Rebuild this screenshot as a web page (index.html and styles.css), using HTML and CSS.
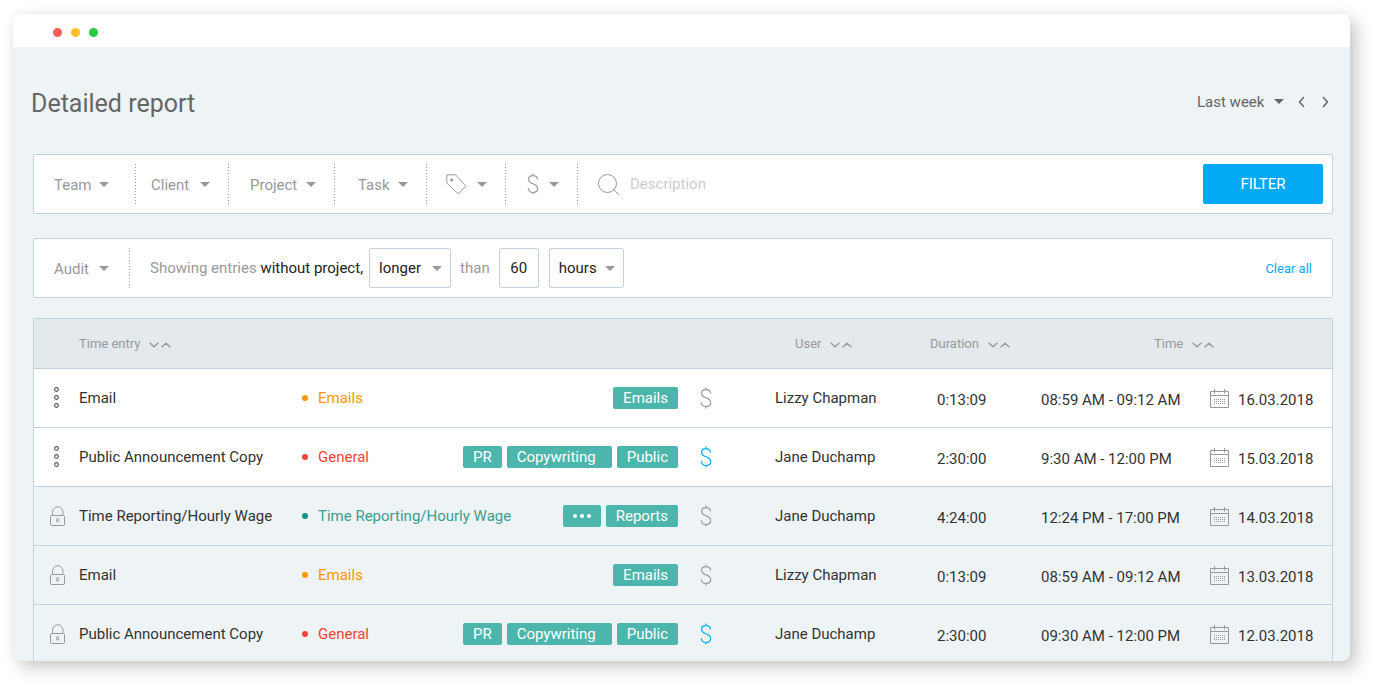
FILE: index.html
```html
<!DOCTYPE html>
<html lang="en">
<head>
<meta charset="utf-8">
<title>Detailed report</title>
<link rel="stylesheet" href="styles.css">
</head>
<body>
<svg class="sprite" aria-hidden="true">
  <symbol id="caret" viewBox="0 0 10 5"><path d="M0 0h10L5 5z" fill="currentColor"/></symbol>
  <symbol id="dollar" viewBox="0 0 12 22"><path d="M10.500 6.600C10.500 4 8.700 2.600 6 2.600S1.600 4 1.600 6.400c0 2.300 1.800 3.400 4.400 4.400 2.900 1.100 4.700 2.200 4.700 4.800 0 2.400-2 3.900-4.700 3.900S1.300 18 1.300 15.200M6 .5v2M6 19.500v2" fill="none" stroke="currentColor" stroke-width="1.200"/></symbol>
  <symbol id="sort" viewBox="0 0 22 6"><path d="M.6.7 5 4.800 9.400.7M12.600 5.300 17 1.200l4.400 4.100" fill="none" stroke="currentColor" stroke-width="1.400"/></symbol>
  <symbol id="lock" viewBox="0 0 16 20"><path d="M2.500 9V6.500a5 5.500 0 0 1 10.500 0V9" fill="none" stroke="currentColor"/><rect x=".5" y="9.500" width="14" height="10" rx="1" fill="none" stroke="currentColor"/><rect x="6.500" y="12.500" width="2.200" height="3.500" rx="1" fill="none" stroke="currentColor"/></symbol>
  <symbol id="more" viewBox="0 0 6 22"><g fill="none" stroke="currentColor" stroke-width="1.100"><circle cx="2.500" cy="2.500" r="1.900"/><circle cx="2.500" cy="10.500" r="1.900"/><circle cx="2.500" cy="18.500" r="1.900"/></g></symbol>
  <symbol id="calendar" viewBox="0 0 19 19"><path d="M.5 2.500h18v16H.5zM.5 6.500h18M4.500 0v4.500M14.500 0v4.500" fill="none" stroke="currentColor"/><path d="M4 10.500h11M4 12.500h11M4 14.500h11" stroke="currentColor" stroke-dasharray="1 1"/></symbol>
</svg>
<main class="window">
  <div class="titlebar"><span class="light red"></span><span class="light yellow"></span><span class="light green"></span></div>
  <div class="content">
    <header class="head">
      <h1>Detailed report</h1>
      <div class="range">
        <label class="drop"><select aria-label="Period"><option>Last week</option></select><svg class="caret"><use href="#caret"/></svg></label>
        <button class="step" aria-label="Previous"><svg viewBox="0 0 7 12"><path d="M6 1 1.500 6 6 11"/></svg></button>
        <button class="step" aria-label="Next"><svg viewBox="0 0 7 12"><path d="m1 1 4.500 5L1 11"/></svg></button>
      </div>
    </header>

    <form class="bar filters">
      <div class="seg team"><label class="drop"><select aria-label="Team"><option>Team</option></select><svg class="caret"><use href="#caret"/></svg></label></div>
      <div class="seg client"><label class="drop"><select aria-label="Client"><option>Client</option></select><svg class="caret"><use href="#caret"/></svg></label></div>
      <div class="seg project"><label class="drop"><select aria-label="Project"><option>Project</option></select><svg class="caret"><use href="#caret"/></svg></label></div>
      <div class="seg task"><label class="drop"><select aria-label="Task"><option>Task</option></select><svg class="caret"><use href="#caret"/></svg></label></div>
      <div class="seg tag-filter"><button type="button" class="icon-drop" aria-label="Tags"><svg class="tag-icon" viewBox="0 0 21 21"><path d="M.7.9 9.500.7 20 12.300 12.200 19.800.9 9.200z" fill="none" stroke="currentColor"/><circle cx="5.700" cy="6" r="1.600" fill="currentColor"/></svg><svg class="caret"><use href="#caret"/></svg></button></div>
      <div class="seg billing"><button type="button" class="icon-drop" aria-label="Billable"><svg class="dollar"><use href="#dollar"/></svg><svg class="caret"><use href="#caret"/></svg></button></div>
      <label class="search"><svg viewBox="0 0 21 21"><circle cx="9.500" cy="9.500" r="9"/><path d="m15.500 15.500 5 5"/></svg><input type="text" placeholder="Description" aria-label="Description"></label>
      <button type="button" class="filter-btn">FILTER</button>
    </form>

    <form class="bar audit">
      <div class="seg audit-seg"><label class="drop"><select aria-label="Audit"><option>Audit</option></select><svg class="caret"><use href="#caret"/></svg></label></div>
      <p class="showing">Showing entries <strong>without project,</strong></p>
      <label class="drop boxed longer"><select aria-label="Comparison"><option>longer</option></select><svg class="caret"><use href="#caret"/></svg></label>
      <span class="than">than</span>
      <input class="amount" type="text" value="60" aria-label="Amount">
      <label class="drop boxed hours"><select aria-label="Unit"><option>hours</option></select><svg class="caret"><use href="#caret"/></svg></label>
      <a class="clear" href="#">Clear all</a>
    </form>

    <table class="report">
      <colgroup><col class="c-icon"><col class="c-entry"><col class="c-project"><col class="c-bill"><col class="c-user"><col class="c-duration"><col class="c-time"><col class="c-date"></colgroup>
      <thead>
        <tr>
          <th></th>
          <th>Time entry<svg class="sort"><use href="#sort"/></svg></th>
          <th></th>
          <th></th>
          <th class="h-user">User<svg class="sort"><use href="#sort"/></svg></th>
          <th>Duration<svg class="sort"><use href="#sort"/></svg></th>
          <th class="h-time" colspan="2">Time<svg class="sort"><use href="#sort"/></svg></th>
        </tr>
      </thead>
      <tbody>
        <tr>
          <td class="status"><button aria-label="More"><svg class="more"><use href="#more"/></svg></button></td>
          <td>Email</td>
          <td><div class="work"><span class="proj orange">Emails</span><span class="tag">Emails</span></div></td>
          <td class="bill"><svg class="dollar"><use href="#dollar"/></svg></td>
          <td>Lizzy Chapman</td>
          <td class="num dur">0:13:09</td>
          <td class="num">08:59 AM - 09:12 AM</td>
          <td><div class="date"><svg><use href="#calendar"/></svg><span class="num">16.03.2018</span></div></td>
        </tr>
        <tr>
          <td class="status"><button aria-label="More"><svg class="more"><use href="#more"/></svg></button></td>
          <td>Public Announcement Copy</td>
          <td><div class="work"><span class="proj crimson">General</span><span class="tag">PR</span><span class="tag wide">Copywriting</span><span class="tag">Public</span></div></td>
          <td class="bill on"><svg class="dollar"><use href="#dollar"/></svg></td>
          <td>Jane Duchamp</td>
          <td class="num dur">2:30:00</td>
          <td class="num">9:30 AM - 12:00 PM</td>
          <td><div class="date"><svg><use href="#calendar"/></svg><span class="num">15.03.2018</span></div></td>
        </tr>
        <tr class="locked">
          <td class="status"><svg class="lock"><use href="#lock"/></svg></td>
          <td>Time Reporting/Hourly Wage</td>
          <td><div class="work"><span class="proj teal">Time Reporting/Hourly Wage</span><button class="tag dots" aria-label="More tags"><i></i><i></i><i></i></button><span class="tag">Reports</span></div></td>
          <td class="bill"><svg class="dollar"><use href="#dollar"/></svg></td>
          <td>Jane Duchamp</td>
          <td class="num dur">4:24:00</td>
          <td class="num">12:24 PM - 17:00 PM</td>
          <td><div class="date"><svg><use href="#calendar"/></svg><span class="num">14.03.2018</span></div></td>
        </tr>
        <tr class="locked">
          <td class="status"><svg class="lock"><use href="#lock"/></svg></td>
          <td>Email</td>
          <td><div class="work"><span class="proj orange">Emails</span><span class="tag">Emails</span></div></td>
          <td class="bill"><svg class="dollar"><use href="#dollar"/></svg></td>
          <td>Lizzy Chapman</td>
          <td class="num dur">0:13:09</td>
          <td class="num">08:59 AM - 09:12 AM</td>
          <td><div class="date"><svg><use href="#calendar"/></svg><span class="num">13.03.2018</span></div></td>
        </tr>
        <tr class="locked">
          <td class="status"><svg class="lock"><use href="#lock"/></svg></td>
          <td>Public Announcement Copy</td>
          <td><div class="work"><span class="proj crimson">General</span><span class="tag">PR</span><span class="tag wide">Copywriting</span><span class="tag">Public</span></div></td>
          <td class="bill on"><svg class="dollar"><use href="#dollar"/></svg></td>
          <td>Jane Duchamp</td>
          <td class="num dur">2:30:00</td>
          <td class="num">09:30 AM - 12:00 PM</td>
          <td><div class="date"><svg><use href="#calendar"/></svg><span class="num">12.03.2018</span></div></td>
        </tr>
      </tbody>
    </table>
  </div>
</main>
</body>
</html>
```
FILE: styles.css
```css
* { box-sizing: border-box; }
body {
  margin: 0;
  height: 100vh;
  padding: 14px 27px 27px 13px;
  background: #fff;
  font: 15px/20px Roboto, "Liberation Sans", sans-serif;
  color: #333;
}
.sprite { display: none; }
svg { display: block; flex: none; }
button, input, select { font: inherit; color: inherit; background: none; border: 0; padding: 0; margin: 0; outline: 0; }
button { cursor: pointer; }
select { appearance: none; }

.window {
  height: 100%;
  overflow: hidden;
  border-radius: 8px;
  background: #eef3f6;
  box-shadow: 7px 7px 18px rgba(0, 0, 0, .2), 0 0 12px rgba(0, 0, 0, .05);
}
.titlebar { display: flex; align-items: center; gap: 9px; height: 33px; padding: 4px 40px 0; background: #fff; }
.light { width: 9px; height: 9px; border-radius: 50%; }
.light.red { background: #ff5f57; }
.light.yellow { background: #ffbd2e; }
.light.green { background: #28ca42; }

.content { padding: 0 17px 0 20px; }
.head { display: flex; align-items: center; justify-content: space-between; height: 107px; color: #666; }
h1 { margin: 6px 0 0 -2px; font-size: 25px; line-height: 32px; font-weight: 400; }
.range { display: flex; align-items: center; gap: 14px; padding: 2px 4px 0 0; }
.step svg { width: 7px; height: 12px; fill: none; stroke: #666; stroke-width: 1.5; }
.step + .step { margin-left: 3px; }

.drop { display: grid; grid-template-columns: 1fr auto; align-items: center; }
.drop select { grid-area: 1 / 1 / 2 / 3; padding-right: 16px; height: 24px; }
.drop .caret { grid-area: 1 / 2 / 2 / 3; pointer-events: none; }
.range .drop select { padding-right: 19px; }
.caret { width: 10px; height: 5px; }

.bar { display: flex; align-items: center; height: 60px; background: #fff; border: 1px solid #c5d1da; border-radius: 2px; color: #999; }
.seg {
  display: flex; align-items: center; justify-content: flex-end;
  height: 41px; padding-right: 19px;
  background: repeating-linear-gradient(#999 0 1px, transparent 1px 3px) right / 1px 100% no-repeat;
}
.seg .drop { flex: 1; padding-top: 1px; }
.team { width: 102px; padding: 0 27px 0 20px; }
.client { width: 93px; padding-left: 15px; }
.project { width: 106px; padding-left: 21px; }
.task { width: 92px; padding-left: 23px; }
.tag-filter { width: 79px; }
.billing { width: 72px; }
.audit-seg { width: 96px; padding: 0 21px 0 20px; }
.icon-drop { display: flex; align-items: center; gap: 10px; }
.tag-icon { width: 21px; height: 21px; }
.dollar { width: 12px; height: 22px; }
.search { display: flex; align-items: center; gap: 11px; flex: 1; padding-left: 20px; }
.search svg { width: 21px; height: 21px; fill: none; stroke: #999; }
.search input { flex: 1; min-width: 0; height: 24px; }
.search input::placeholder { color: #ccc; opacity: 1; }
.filter-btn { width: 120px; height: 40px; margin-right: 9px; border-radius: 2px; background: #03a9f4; color: #fff; }

.audit { margin: 24px 0 20px; }
.showing { margin: 0 6px 0 20px; }
.showing strong { font-weight: 400; color: #222; }
.boxed { height: 40px; border: 1px solid #c5d1da; border-radius: 2px; padding: 0 8px 0 9px; }
.boxed select { color: #222; }
.boxed .caret { color: #999; }
.longer { width: 82px; }
.than { margin: 0 9px; }
.amount { width: 40px; height: 40px; border: 1px solid #c5d1da; border-radius: 2px; text-align: center; color: #222; margin-right: 10px; }
.hours { width: 75px; }
.clear { margin: 2px 20px 0 auto; font-size: 13px; color: #03a9f4; text-decoration: none; }

.report { width: 100%; table-layout: fixed; border: 1px solid #c5d1da; border-bottom: 0; border-radius: 2px; border-spacing: 0; }
.c-icon { width: 45px; }
.c-entry { width: 223px; }
.c-bill { width: 97px; }
.c-user { width: 155px; }
.c-duration { width: 111px; }
.c-time { width: 169px; }
.c-date { width: 122px; }
th { height: 50px; padding: 0; background: #e4e9ed; border-bottom: 1px solid #c5d1da; text-align: left; font-size: 13px; font-weight: 400; color: #999; }
.h-user { padding-left: 20px; }
.h-time { padding-left: 113px; }
.sort { display: inline-block; width: 22px; height: 6px; margin-left: 9px; }
td { height: 59px; padding: 0; background: #fff; border-bottom: 1px solid #c5d1da; white-space: nowrap; }
.locked td { background: #eef3f6; }
.status { padding-left: 16px; color: #999; }
.status button { display: block; padding-left: 4px; color: #555; }
.more { width: 6px; height: 22px; }
.lock { width: 16px; height: 20px; }
.work { display: flex; align-items: center; gap: 5px; }
.proj { display: flex; align-items: center; gap: 10px; margin-right: auto; }
.proj::before { content: ""; width: 6px; height: 6px; border-radius: 50%; background: currentColor; }
.orange { color: #ff9800; }
.crimson { color: #f44336; }
.teal { color: #3a9e92; }
.teal::before { background: #009688; }
.tag { height: 22px; padding: 0 10px; border-radius: 2px; background: #4db6ac; color: #fff; line-height: 22px; }
.tag.wide { padding-right: 16px; }
.dots { display: flex; align-items: center; gap: 3px; }
.dots i { width: 4px; height: 4px; border-radius: 50%; background: #fff; }
.bill { padding-left: 22px; color: #999; }
.bill.on { color: #03a9f4; }
.num { padding-top: 4px; }
.dur { padding-left: 7px; }
.date { display: flex; align-items: center; gap: 9px; }
.date svg { width: 19px; height: 19px; color: #999; }
```
